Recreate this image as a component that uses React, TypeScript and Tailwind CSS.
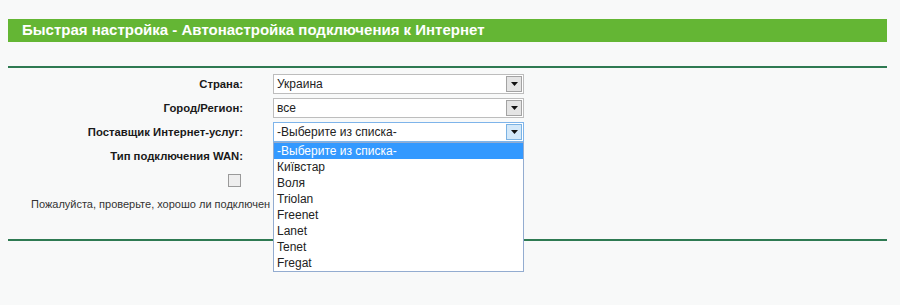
import React from "react";

const options = ["-Выберите из списка-", "Київстар", "Воля", "Triolan", "Freenet", "Lanet", "Tenet", "Fregat"];

function Arrow({ focused }: { focused?: boolean }) {
  return (
    <div
      className={`flex h-[16px] w-[16px] items-center justify-center border ${
        focused ? "border-[#7ab2e3] bg-[#d3e8f9]" : "border-[#a3a3a3] bg-[#e4e4e4]"
      }`}
    >
      <svg width="7" height="4" viewBox="0 0 7 4">
        <path d="M0 0h7L3.5 4z" fill="#111" />
      </svg>
    </div>
  );
}

function Select({ value, focused }: { value: string; focused?: boolean }) {
  return (
    <div
      className={`flex h-[20px] w-[251px] items-center justify-between border bg-white pl-[3px] pr-[1px] ${
        focused ? "border-[#7eb4ea]" : "border-[#bdbdbd]"
      }`}
    >
      <span className="text-[12px] text-[#222]">{value}</span>
      <Arrow focused={focused} />
    </div>
  );
}

function Row({ label, children }: { label?: string; children?: React.ReactNode }) {
  return (
    <div className="flex h-[24px] items-center">
      <div className="w-[235px] text-right text-[11.3px] font-bold text-[#1a1a1a]">{label}</div>
      <div className="ml-[30px]">{children}</div>
    </div>
  );
}

export default function App() {
  return (
    <div className="min-h-[305px] bg-[#f8f9f9] pl-[8px] pt-[19px] font-['Liberation_Sans',Arial,sans-serif]">
      <div className="w-[879px]">
        <div className="flex h-[23px] items-center bg-[#64b634] px-[14px] text-[15px] font-bold text-white">
          Быстрая настройка - Автонастройка подключения к Интернет
        </div>

        <div className="mt-[24px] border-t-2 border-[#2e7a52] pt-[4px]">
          <Row label="Страна:">
            <Select value="Украина" />
          </Row>
          <Row label="Город/Регион:">
            <Select value="все" />
          </Row>
          <Row label="Поставщик Интернет-услуг:">
            <div className="relative">
              <Select value="-Выберите из списка-" focused />
              <div className="absolute left-0 top-full z-10 w-[251px] border border-[#93acd0] bg-white">
                {options.map((o, i) => (
                  <div
                    key={o}
                    className={`flex h-[16px] items-center pl-[3px] text-[12px] ${
                      i === 0 ? "bg-[#3399ff] text-white" : "text-[#222]"
                    }`}
                  >
                    {o}
                  </div>
                ))}
              </div>
            </div>
          </Row>
          <Row label="Тип подключения WAN:" />
          <div className="flex h-[24px] items-center">
            <div className="flex w-[233px] justify-end">
              <div className="h-[13px] w-[13px] border border-[#9a9a9a] bg-[#eeeeee]" />
            </div>
          </div>
          <div className="flex h-[24px] items-center pl-[23px] text-[11px] text-[#333]">
            Пожалуйста, проверьте, хорошо ли подключен
          </div>
        </div>

        <div className="mt-[23px] border-t-2 border-[#2e7a52]" />
      </div>
    </div>
  );
}
